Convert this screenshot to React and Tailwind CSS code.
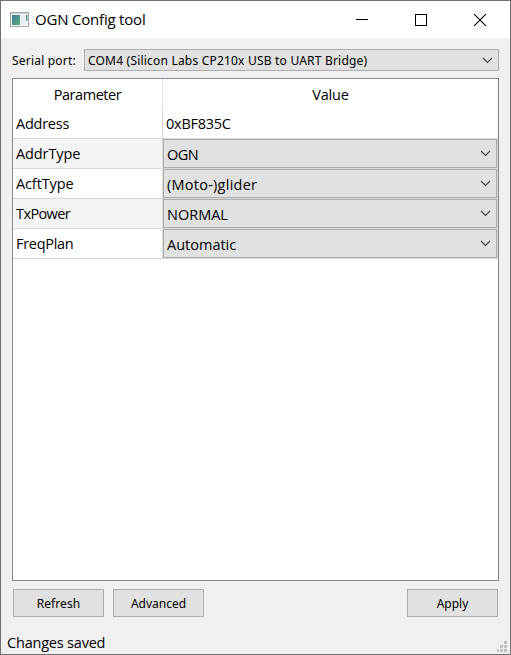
function Chevron() {
  return (
    <svg className="mr-[5px] shrink-0" width="11" height="7" viewBox="0 0 11 7" fill="none" stroke="#404040" strokeWidth="1.1">
      <path d="M1 1 L5.5 5.5 L10 1" />
    </svg>
  );
}

function Button({ children, className }) {
  return (
    <button className={`h-[28px] w-[91px] border border-[#adadad] bg-[#e1e1e1] pt-px text-center font-['Noto_Sans',sans-serif] text-[12px] leading-[26px] ${className}`}>
      {children}
    </button>
  );
}

const rows = [
  { name: "AddrType", value: "OGN", shade: "bg-[#f5f5f5]", ns: "tracking-[-0.1px]", vs: "tracking-[-0.5px]" },
  { name: "AcftType", value: "(Moto-)glider", shade: "bg-white", ns: "tracking-[-0.12px]", vs: "tracking-[0.25px]" },
  { name: "TxPower", value: "NORMAL", shade: "bg-[#f5f5f5]", ns: "tracking-[-0.6px]", vs: "tracking-[0px]" },
  { name: "FreqPlan", value: "Automatic", shade: "bg-white", ns: "tracking-[-0.3px]", vs: "tracking-[0px]" },
];

export default function App() {
  return (
    <div className="flex h-[655px] w-[511px] flex-col overflow-hidden whitespace-nowrap border border-[#707070] bg-[#f0f0f0] font-['Open_Sans',sans-serif] text-[14.5px] text-black">
      <header className="flex h-[37px] shrink-0 items-center bg-white">
        <svg className="ml-[9px]" width="19" height="16" viewBox="0 0 19 16">
          <defs>
            <linearGradient id="pane" x1="0" y1="0" x2="1" y2="1">
              <stop offset="0" stopColor="#4478a0" />
              <stop offset="1" stopColor="#55b078" />
            </linearGradient>
          </defs>
          <rect x="0.5" y="0.5" width="18" height="14" fill="#f6f8f9" stroke="#a2a8ad" />
          <rect x="1" y="1" width="17" height="1" fill="#c9d0d5" />
          <rect x="2" y="3" width="8" height="10" fill="url(#pane)" />
          <rect x="11" y="3" width="4" height="10" fill="#e8eef0" />
          <rect x="16" y="3" width="1.5" height="6" fill="url(#pane)" />
        </svg>
        <span className="ml-[6px] text-[15px] tracking-[-0.2px]">OGN Config tool</span>
        <div className="ml-auto mr-[24px] flex items-center gap-[47px]">
          <svg width="12" height="12" viewBox="0 0 12 12"><path d="M0 5.5H12" stroke="#000" /></svg>
          <svg width="12" height="12" viewBox="0 0 12 12"><rect x="0.5" y="0.5" width="11" height="11" fill="none" stroke="#000" /></svg>
          <svg width="12" height="12" viewBox="0 0 12 12"><path d="M0 0L12 12M12 0L0 12" stroke="#000" strokeWidth="1.1" /></svg>
        </div>
      </header>

      <div className="mt-[11px] flex h-[22px] shrink-0 items-center pl-[11px] pr-[11px] font-['Noto_Sans',sans-serif] text-[12px]">
        <span className="w-[72px] pt-[2px] tracking-[0.2px]">Serial port:</span>
        <div className="flex h-[22px] grow items-center justify-between border border-[#adadad] bg-[#e1e1e1] pl-[3px]">
          <span className="pt-[2px] tracking-[0.2px]">COM4 (Silicon Labs CP210x USB to UART Bridge)</span>
          <Chevron />
        </div>
      </div>

      <main className="ml-[11px] mt-[7px] h-[503px] w-[487px] shrink-0 border border-[#828790] bg-white">
        <div className="flex h-[30px] text-center leading-[32px]">
          <div className="w-[150px] border-r border-[#e5e5e5] tracking-[-0.45px]">Parameter</div>
          <div className="w-[335px] border-r border-[#f0f0f0] pl-px tracking-[-0.2px]">Value</div>
        </div>
        <div className="flex h-[30px] leading-[30px]">
          <div className="w-[150px] border-b border-r border-[#d8d8d8] pl-[3px] tracking-[-0.25px]">Address</div>
          <div className="w-[335px] border-b border-r border-b-[#d8d8d8] border-r-[#f0f0f0] pl-[3px] tracking-[-0.25px]">0xBF835C</div>
        </div>
        {rows.map((r) => (
          <div key={r.name} className="flex h-[30px] leading-[30px]">
            <div className={`w-[150px] border-b border-r border-[#d8d8d8] pl-[3px] ${r.shade} ${r.ns}`}>{r.name}</div>
            <div className="w-[335px] border-b border-r border-[#d8d8d8]">
              <div className="flex h-[29px] items-center justify-between border border-[#adadad] bg-[#e1e1e1] pl-[3px]">
                <span className={`pt-[2px] ${r.vs}`}>{r.value}</span>
                <Chevron />
              </div>
            </div>
          </div>
        ))}
      </main>

      <div className="mt-[8px] flex shrink-0 pl-[12px] pr-[12px]">
        <Button className="mr-[9px] tracking-[0.1px]">Refresh</Button>
        <Button>Advanced</Button>
        <Button className="ml-auto">Apply</Button>
      </div>

      <footer className="flex h-[37px] grow items-end justify-between pl-[6px] pr-[3px]">
        <span className="leading-[23px] tracking-[-0.2px]">Changes saved</span>
        <svg className="mb-[2px]" width="11" height="11" viewBox="0 0 11 11" fill="#bfbfbf">
          <path d="M8 0h3v3H8zM4 4h3v3H4zM8 4h3v3H8zM1 8h2v3H1zM4 8h3v3H4zM8 8h3v3H8z" />
        </svg>
      </footer>
    </div>
  );
}
